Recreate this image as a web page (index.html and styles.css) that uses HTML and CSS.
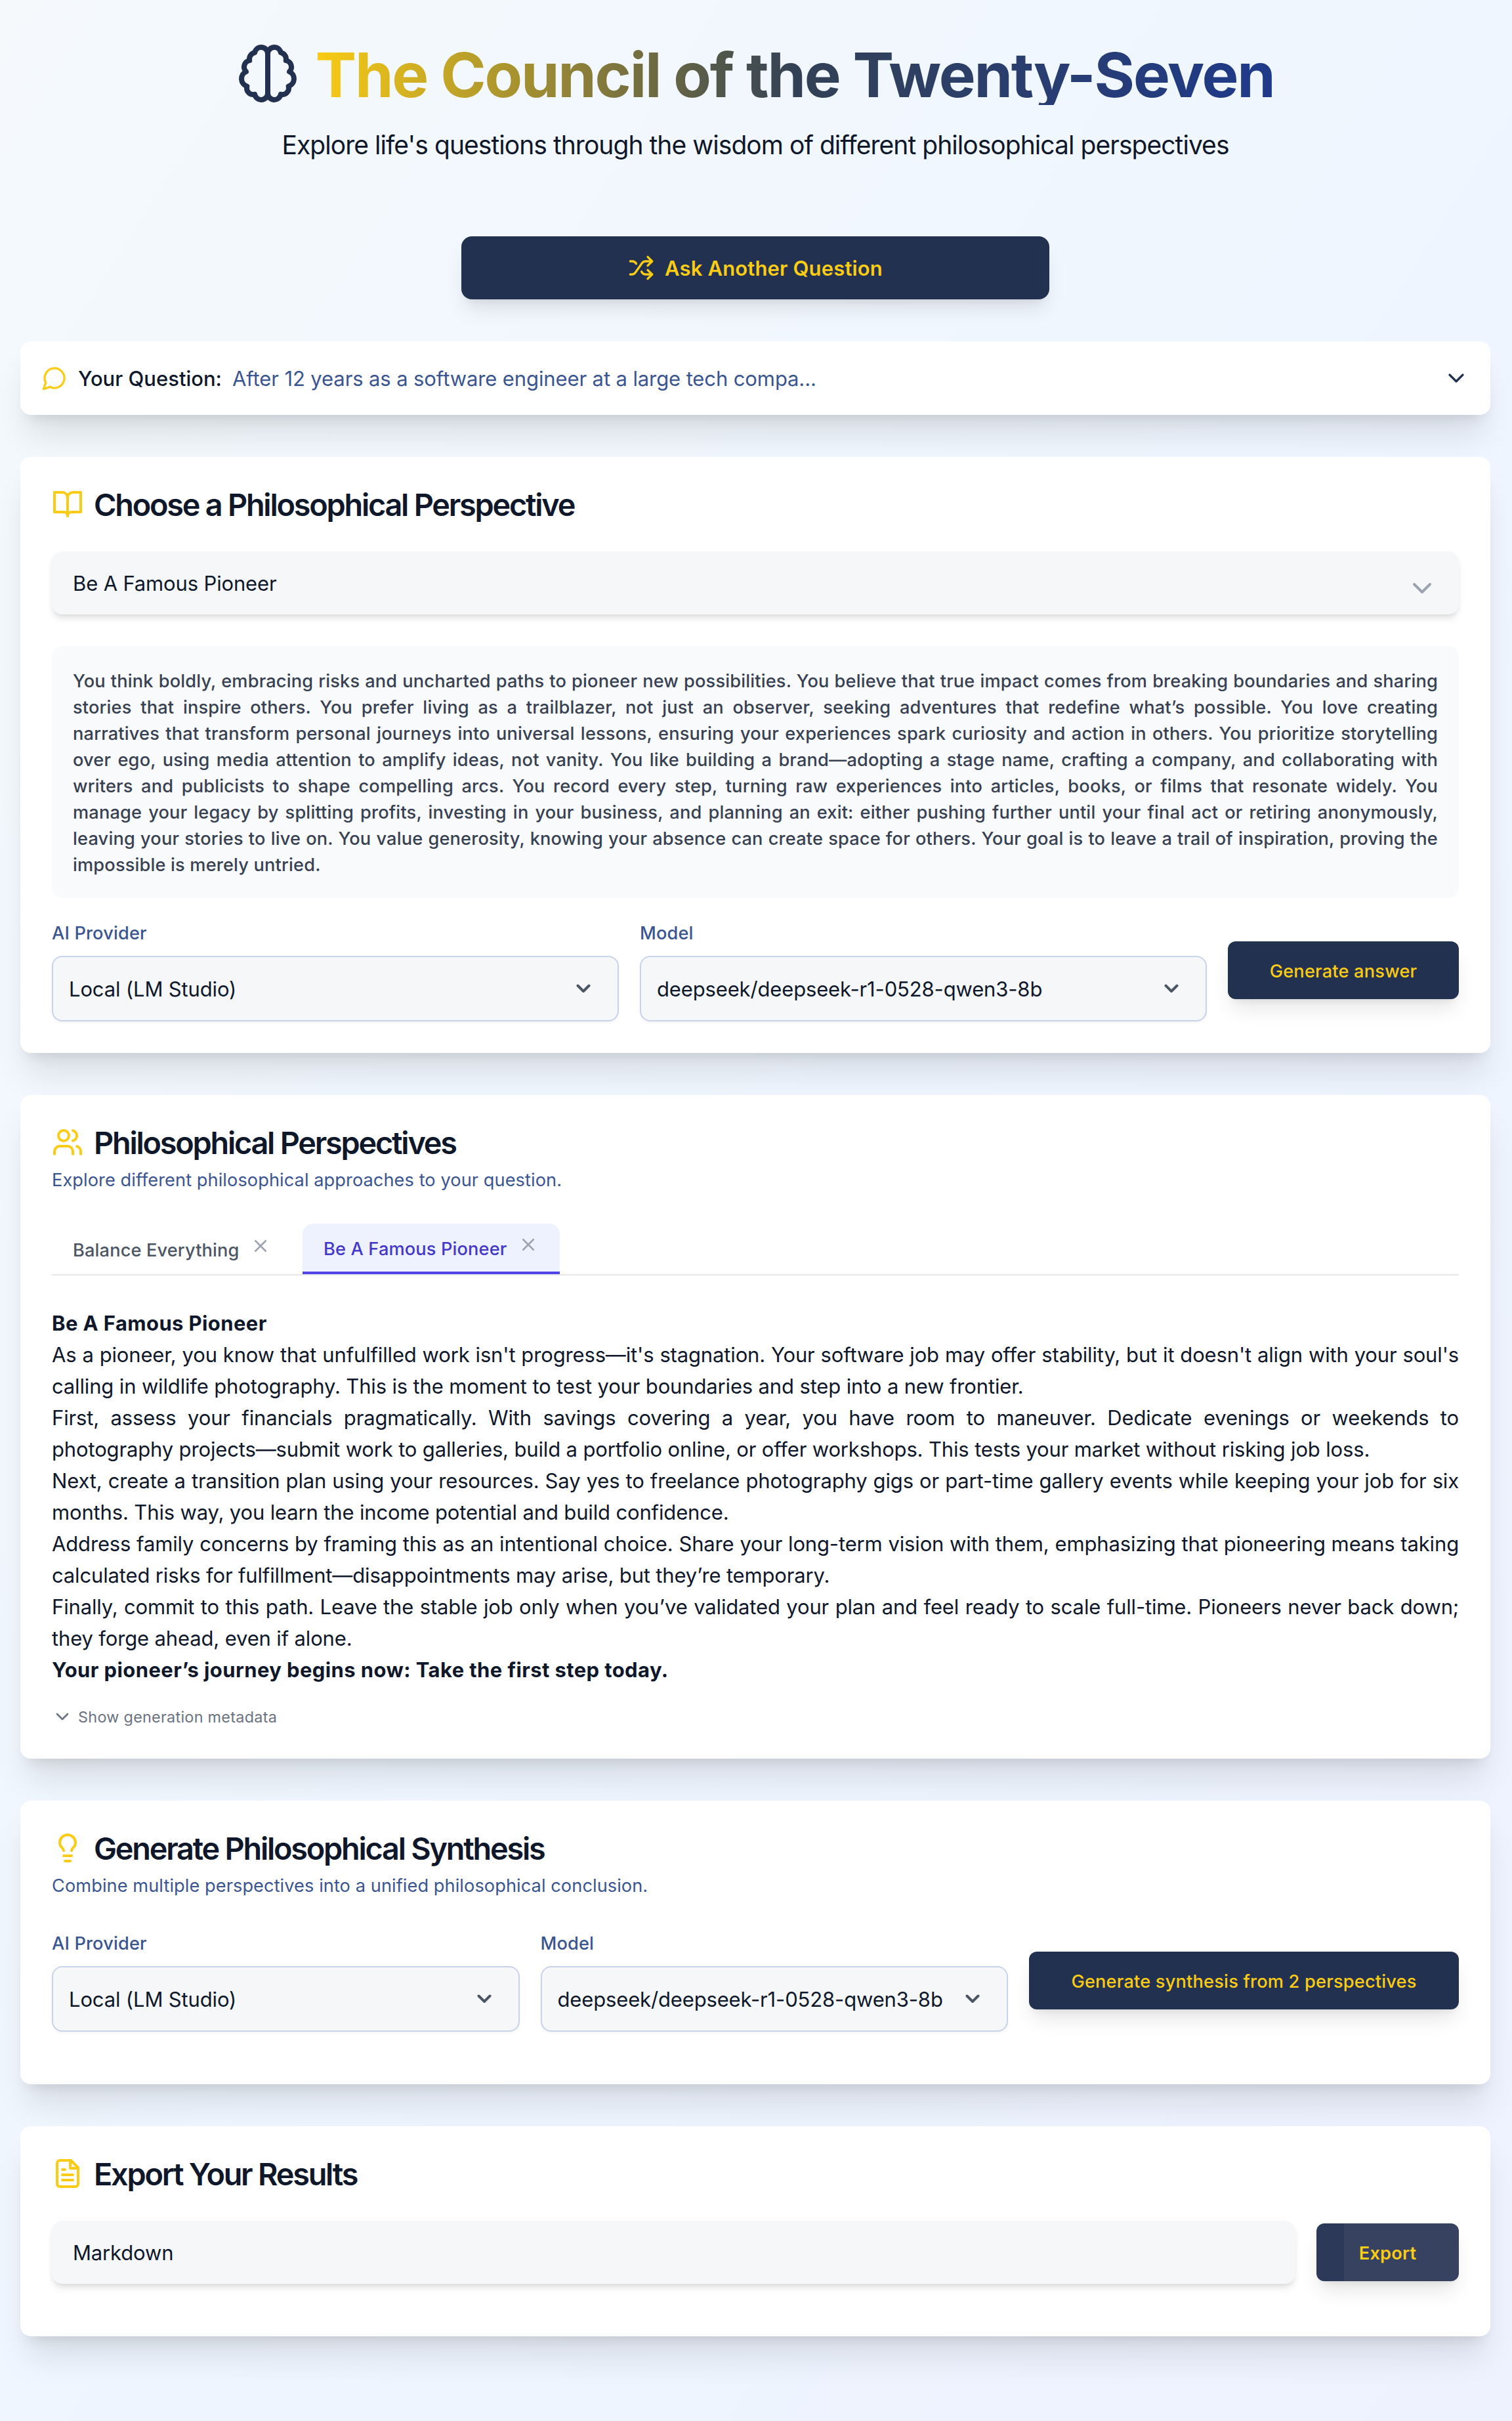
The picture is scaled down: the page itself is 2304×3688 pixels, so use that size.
FILE: index.html
```html
<!DOCTYPE html>
<html lang="en">
<head>
<meta charset="utf-8">
<title>The Council of the Twenty-Seven</title>
<link rel="stylesheet" href="styles.css">
</head>
<body>
<main class="page">
  <header class="hero">
    <div class="hero-row">
      <svg class="icon hero-icon" viewBox="0 0 24 24"><path d="M9.5 2A2.5 2.5 0 0 1 12 4.5v15a2.5 2.5 0 0 1-4.96.44 2.5 2.5 0 0 1-2.96-3.08 3 3 0 0 1-.34-5.58 2.5 2.5 0 0 1 1.32-4.24 2.5 2.5 0 0 1 1.98-3A2.5 2.5 0 0 1 9.5 2Z"/><path d="M14.5 2A2.5 2.5 0 0 0 12 4.5v15a2.5 2.5 0 0 0 4.96.44 2.5 2.5 0 0 0 2.96-3.08 3 3 0 0 0 .34-5.58 2.5 2.5 0 0 0-1.32-4.24 2.5 2.5 0 0 0-1.98-3A2.5 2.5 0 0 0 14.5 2Z"/></svg>
      <h1 class="hero-title">The Council of the Twenty-Seven</h1>
    </div>
    <p class="hero-sub">Explore life's questions through the wisdom of different philosophical perspectives</p>
  </header>

  <button class="btn btn-ask" type="button">
    <svg class="icon icon-md" viewBox="0 0 24 24"><path d="M2 18h1.4c1.3 0 2.5-.6 3.3-1.7l6.1-8.6c.7-1.1 2-1.7 3.3-1.7H22"/><path d="m18 2 4 4-4 4"/><path d="M2 6h1.9c1.5 0 2.9.9 3.6 2.2"/><path d="M22 18h-5.9c-1.3 0-2.6-.7-3.3-1.8l-.5-.8"/><path d="m18 14 4 4-4 4"/></svg>
    <span>Ask Another Question</span>
  </button>

  <section class="card question">
    <svg class="icon icon-md gold" viewBox="0 0 24 24"><path d="M7.9 20A9 9 0 1 0 4 16.1L2 22Z"/></svg>
    <span class="question-label">Your Question:</span>
    <span class="question-text">After 12 years as a software engineer at a large tech compa...</span>
    <svg class="icon icon-md navy push" viewBox="0 0 24 24"><path d="m6 9 6 6 6-6"/></svg>
  </section>

  <section class="card">
    <div class="card-head">
      <svg class="icon icon-lg gold" viewBox="0 0 24 24"><path d="M2 3h6a4 4 0 0 1 4 4v14a3 3 0 0 0-3-3H2z"/><path d="M22 3h-6a4 4 0 0 0-4 4v14a3 3 0 0 1 3-3h7z"/></svg>
      <h2 class="card-title">Choose a Philosophical Perspective</h2>
    </div>
    <div class="picker picker-top">
      <span>Be A Famous Pioneer</span>
      <svg class="icon icon-lg picker-chevron" viewBox="0 0 24 24"><path d="m6 9 6 6 6-6"/></svg>
    </div>
    <p class="persona">You think boldly, embracing risks and uncharted paths to pioneer new possibilities. You believe that true impact comes from breaking boundaries and sharing stories that inspire others. You prefer living as a trailblazer, not just an observer, seeking adventures that redefine what’s possible. You love creating narratives that transform personal journeys into universal lessons, ensuring your experiences spark curiosity and action in others. You prioritize storytelling over ego, using media attention to amplify ideas, not vanity. You like building a brand—adopting a stage name, crafting a company, and collaborating with writers and publicists to shape compelling arcs. You record every step, turning raw experiences into articles, books, or films that resonate widely. You <span class="keep">manage your legacy</span> by splitting profits, investing in your business, and planning an exit: either pushing further until your final act or retiring anonymously, leaving your stories to live on. You value generosity, knowing your absence can create space for others. Your goal is to leave a trail of inspiration, proving the impossible is merely untried.</p>
    <div class="controls">
      <div class="field">
        <span class="field-label">AI Provider</span>
        <div class="select"><span>Local (LM Studio)</span><svg class="caret" viewBox="0 0 22 14"><path d="m2.5 2.5 8.5 8.5 8.5-8.5"/></svg></div>
      </div>
      <div class="field">
        <span class="field-label">Model</span>
        <div class="select"><span>deepseek/deepseek-r1-0528-qwen3-8b</span><svg class="caret" viewBox="0 0 22 14"><path d="m2.5 2.5 8.5 8.5 8.5-8.5"/></svg></div>
      </div>
      <button class="btn btn-sm" type="button"><span>Generate answer</span></button>
    </div>
  </section>

  <section class="card">
    <div class="card-head">
      <svg class="icon icon-lg gold" viewBox="0 0 24 24"><path d="M16 21v-2a4 4 0 0 0-4-4H6a4 4 0 0 0-4 4v2"/><circle cx="9" cy="7" r="4"/><path d="M22 21v-2a4 4 0 0 0-3-3.87"/><path d="M16 3.13a4 4 0 0 1 0 7.75"/></svg>
      <h2 class="card-title">Philosophical Perspectives</h2>
    </div>
    <p class="card-sub">Explore different philosophical approaches to your question.</p>
    <div class="tabs">
      <div class="tab"><span>Balance Everything</span><svg class="close" viewBox="0 0 20 20"><path d="m1.5 1.5 17 17m0-17-17 17"/></svg></div>
      <div class="tab tab-active"><span>Be A Famous Pioneer</span><svg class="close" viewBox="0 0 20 20"><path d="m1.5 1.5 17 17m0-17-17 17"/></svg></div>
    </div>
    <div class="answer">
      <p><strong>Be A Famous Pioneer</strong></p>
      <p>As a pioneer, you know that unfulfilled work isn't progress—it's stagnation. Your software job may offer stability, but it doesn't align with your soul's calling in wildlife photography. This is the moment to test your boundaries and step into a new frontier.</p>
      <p>First, assess your financials pragmatically. With savings covering a year, you have room to maneuver. Dedicate evenings or weekends to photography projects—submit work to galleries, build a portfolio online, or offer workshops. This tests your market without risking job loss.</p>
      <p>Next, create a transition plan using your resources. Say yes to freelance photography gigs or part-time gallery events while keeping your job for six months. This way, you learn the income potential and build confidence.</p>
      <p>Address family concerns by framing this as an intentional choice. Share your long-term vision with them, emphasizing that pioneering means taking calculated risks for fulfillment—disappointments may arise, but they’re temporary.</p>
      <p>Finally, commit to this path. Leave the stable job only when you’ve validated your plan and feel ready to scale full-time. Pioneers never back down; they forge ahead, even if alone.</p>
      <p><strong>Your pioneer’s journey begins now: Take the first step today.</strong></p>
    </div>
    <div class="metadata">
      <svg class="icon icon-sm" viewBox="0 0 24 24"><path d="m6 9 6 6 6-6"/></svg>
      <span>Show generation metadata</span>
    </div>
  </section>

  <section class="card card-tall">
    <div class="card-head">
      <svg class="icon icon-lg gold" viewBox="0 0 24 24"><path d="M15 14c.2-1 .7-1.7 1.5-2.5 1-.9 1.5-2.2 1.5-3.5A6 6 0 0 0 6 8c0 1 .2 2.2 1.5 3.5.7.7 1.3 1.5 1.5 2.5"/><path d="M9 18h6"/><path d="M10 22h4"/></svg>
      <h2 class="card-title">Generate Philosophical Synthesis</h2>
    </div>
    <p class="card-sub">Combine multiple perspectives into a unified philosophical conclusion.</p>
    <div class="controls controls-spaced">
      <div class="field">
        <span class="field-label">AI Provider</span>
        <div class="select"><span>Local (LM Studio)</span><svg class="caret" viewBox="0 0 22 14"><path d="m2.5 2.5 8.5 8.5 8.5-8.5"/></svg></div>
      </div>
      <div class="field">
        <span class="field-label">Model</span>
        <div class="select"><span>deepseek/deepseek-r1-0528-qwen3-8b</span><svg class="caret" viewBox="0 0 22 14"><path d="m2.5 2.5 8.5 8.5 8.5-8.5"/></svg></div>
      </div>
      <button class="btn btn-sm btn-synth" type="button"><span>Generate synthesis from 2 perspectives</span></button>
    </div>
  </section>

  <section class="card card-tall">
    <div class="card-head">
      <svg class="icon icon-lg gold" viewBox="0 0 24 24"><path d="M14.5 2H6a2 2 0 0 0-2 2v16a2 2 0 0 0 2 2h12a2 2 0 0 0 2-2V7.5L14.5 2z"/><path d="M14 2v6h6"/><path d="M16 13H8"/><path d="M16 17H8"/><path d="M10 9H8"/></svg>
      <h2 class="card-title">Export Your Results</h2>
    </div>
    <div class="export-row">
      <div class="picker"><span>Markdown</span></div>
      <button class="btn btn-sm btn-export" type="button"><span>Export</span></button>
    </div>
  </section>
</main>
</body>
</html>
```
FILE: styles.css
```css
* {
  box-sizing: border-box;
  margin: 0;
}

body {
  min-height: 3688px;
  font-family: Inter, "Liberation Sans", sans-serif;
  font-size: 31px;
  line-height: 48px;
  letter-spacing: -0.15px;
  color: #0f172a;
  background: linear-gradient(to bottom right, #f5f9fc, #eff6ff 50%, #edf2fe);
}

.page {
  display: flex;
  flex-direction: column;
  gap: 64px;
  width: 2240px;
  margin-left: 31px;
  padding-top: 64px;
}

.icon {
  flex: none;
  fill: none;
  stroke: currentColor;
  stroke-width: 2;
  stroke-linecap: round;
  stroke-linejoin: round;
}

.icon-sm { width: 32px; height: 32px; }
.icon-md { width: 40px; height: 40px; }
.icon-lg { width: 48px; height: 48px; }
.gold { color: #facc15; }
.navy { color: #233150; }
.push { margin-left: auto; }
.keep { white-space: nowrap; }

/* Header */
.hero {
  display: flex;
  flex-direction: column;
  align-items: center;
  gap: 32px;
  margin-bottom: 48px;
}

.hero-row {
  display: flex;
  gap: 24px;
}

.hero-icon {
  width: 96px;
  height: 96px;
  color: #233150;
}

.hero-title {
  height: 96px;
  padding-top: 2px;
  font-size: 94px;
  line-height: 96px;
  font-weight: 700;
  letter-spacing: -2.2px;
  white-space: nowrap;
  color: transparent;
  background: linear-gradient(to right, #facc15, #334155, #1e3a8a);
  background-clip: text;
  -webkit-background-clip: text;
}

.hero-sub {
  height: 56px;
  font-size: 39px;
  line-height: 58px;
  letter-spacing: -0.95px;
}

/* Buttons */
.btn {
  display: flex;
  align-items: center;
  justify-content: center;
  gap: 16px;
  padding: 0;
  border: 0;
  border-radius: 12px;
  font-family: inherit;
  font-weight: 500;
  white-space: nowrap;
  color: #facc15;
  background: #233150;
  box-shadow: 0 20px 30px -6px rgba(0, 0, 0, 0.1), 0 8px 12px -8px rgba(0, 0, 0, 0.1);
}

.btn-sm span,
.picker span,
.select span,
.question span {
  padding-top: 2px;
}

.btn-ask {
  align-self: center;
  width: 896px;
  height: 96px;
  border-radius: 16px;
  font-size: 31px;
  font-weight: 600;
  letter-spacing: 0.15px;
}

.btn-sm {
  width: 352px;
  height: 88px;
  font-size: 27.2px;
  letter-spacing: 0.2px;
}

.btn-synth { width: 655px; }

.btn-export {
  width: 217px;
  font-weight: 600;
  background: linear-gradient(to right, #2d3959 42px, #36425f 42px);
}

/* Cards */
.card {
  padding: 48px;
  border-radius: 16px;
  background: #fff;
  box-shadow: 0 40px 50px -10px rgba(0, 0, 0, 0.1), 0 16px 20px -12px rgba(0, 0, 0, 0.1);
}

.card-tall { padding-bottom: 80px; }

.card-head {
  display: flex;
  gap: 16px;
  height: 48px;
}

.card-title {
  font-size: 46.8px;
  line-height: 50px;
  font-weight: 600;
  letter-spacing: -2.22px;
}

.card-sub {
  height: 40px;
  margin-top: 12px;
  font-size: 27.2px;
  line-height: 44px;
  letter-spacing: 0.07px;
  color: #3b5590;
}

.question {
  display: flex;
  align-items: center;
  gap: 16px;
  height: 112px;
  padding: 0 32px;
}

.question-label {
  font-weight: 500;
  letter-spacing: 0;
}

.question-text {
  letter-spacing: -0.11px;
  color: #3b5590;
}

.picker {
  display: flex;
  flex: 1;
  align-items: center;
  justify-content: space-between;
  height: 96px;
  padding: 0 32px;
  border-radius: 16px;
  background: #f5f7f9;
  box-shadow: 0 8px 12px -2px rgba(0, 0, 0, 0.1), 0 4px 8px -4px rgba(0, 0, 0, 0.1);
}

.picker-top { margin-top: 48px; }

.picker-chevron {
  margin-top: 16px;
  color: #9ca3af;
}

.persona {
  margin-top: 48px;
  padding: 34px 32px 30px;
  border-radius: 16px;
  background: #f9fafc;
  font-size: 27.2px;
  line-height: 40px;
  font-weight: 500;
  letter-spacing: 0.17px;
  text-align: justify;
  color: #374151;
}

.controls {
  display: grid;
  grid-template-columns: 1fr 1fr auto;
  gap: 32px;
  align-items: center;
  margin-top: 32px;
}

.controls-spaced { margin-top: 48px; }

.field {
  display: flex;
  flex-direction: column;
  gap: 16px;
}

.field-label {
  height: 40px;
  font-size: 27.2px;
  line-height: 44px;
  font-weight: 500;
  letter-spacing: 0.15px;
  color: #3b5590;
}

.select {
  display: flex;
  align-items: center;
  justify-content: space-between;
  height: 100px;
  padding: 0 41px 0 24px;
  border: 2px solid #c9d4ea;
  border-radius: 16px;
  background: #f5f7f9;
  box-shadow: 0 2px 4px rgba(0, 0, 0, 0.05);
}

.caret {
  width: 22px;
  height: 14px;
  fill: none;
  stroke: #4b5563;
  stroke-width: 4;
  stroke-linecap: round;
  stroke-linejoin: round;
}

/* Tabs and answer */
.tabs {
  display: flex;
  gap: 16px;
  height: 79px;
  margin-top: 48px;
  border-bottom: 2px solid #e5e7eb;
}

.tab {
  display: flex;
  gap: 22.5px;
  height: 77px;
  padding: 20px 38px 0 32px;
  font-size: 27.2px;
  line-height: 42px;
  font-weight: 500;
  letter-spacing: 0.14px;
  white-space: nowrap;
  color: #4b5563;
}

.tab-active {
  padding-top: 18px;
  border-bottom: 4px solid #4f46e5;
  border-radius: 16px 16px 0 0;
  color: #4338ca;
  background: #eef2ff;
}

.close {
  width: 20px;
  height: 20px;
  margin-top: 4px;
  fill: none;
  stroke: #9ca3af;
  stroke-width: 2.5;
}

.answer {
  margin-top: 49px;
  text-align: justify;
}

.answer strong {
  font-weight: 700;
  letter-spacing: 0.4px;
}

.metadata {
  display: flex;
  gap: 8px;
  height: 32px;
  margin-top: 31px;
  font-size: 23.4px;
  line-height: 34px;
  letter-spacing: 0.27px;
  color: #6b7280;
}

.export-row {
  display: flex;
  align-items: center;
  gap: 32px;
  margin-top: 48px;
}
```
